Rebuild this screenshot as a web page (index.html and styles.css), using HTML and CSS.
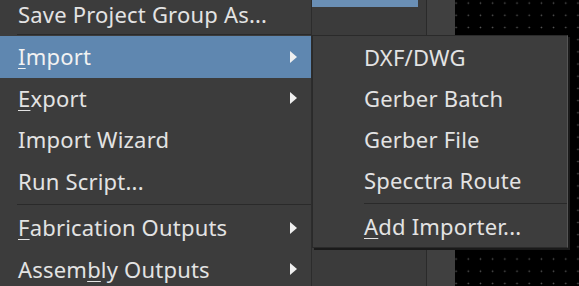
FILE: index.html
```html
<!DOCTYPE html>
<html lang="en">
<head>
  <meta charset="UTF-8" />
  <meta name="viewport" content="width=device-width, initial-scale=1.0" />
  <title>File Menu - Import</title>
  <link rel="stylesheet" href="styles.css">
</head>
<body>
  <div class="desktop">
    <div class="menu-col">
      <ul class="menu">
        <li class="item item-cut">Save Project Group As...</li>
        <li class="sep sep-top"></li>
        <li class="item active"><span><u>I</u>mport</span><i class="arrow"></i></li>
        <li class="item"><span><u>E</u>xport</span><i class="arrow"></i></li>
        <li class="item">Import Wizard</li>
        <li class="item">Run Script...</li>
        <li class="sep"></li>
        <li class="item"><span><u>F</u>abrication Outputs</span><i class="arrow"></i></li>
        <li class="item"><span>Assem<u>b</u>ly Outputs</span><i class="arrow"></i></li>
      </ul>
    </div>
    <div class="panel">
      <div class="panel-tab"></div>
    </div>
    <div class="strip"></div>
    <div class="canvas"></div>

    <ul class="menu submenu">
      <li class="item">DXF/DWG</li>
      <li class="item">Gerber Batch</li>
      <li class="item">Gerber File</li>
      <li class="item">Specctra Route</li>
      <li class="sep"></li>
      <li class="item"><span><u>A</u>dd Importer...</span></li>
    </ul>
  </div>
</body>
</html>
```

FILE: styles.css
```css
body {
  margin: 0;
  background: #000;
  font-family: "Noto Sans", "Open Sans", sans-serif;
  font-size: 22px;
  letter-spacing: 0.2px;
  color: #e3e3e3;
  overflow: hidden;
}
.desktop {
  position: relative;
  display: flex;
  width: 579px;
  height: 286px;
  overflow: hidden;
}
.menu-col {
  width: 311px;
  background: #3c3c3c;
  border-right: 1px solid #2c2c2c;
}
.menu {
  list-style: none;
  margin: 0;
  padding: 0;
}
.menu-col .item {
  height: 41.5px;
}
.menu-col .item-cut {
  height: 34px;
  line-height: 28px;
  align-items: flex-start;
}
.item {
  height: 41px;
  display: flex;
  align-items: center;
  justify-content: space-between;
  padding: 0 14px 0 18px;
  white-space: nowrap;
  line-height: 41px;
}
.item.active {
  background: #5f87b0;
  color: #f2f2f2;
}
.item u {
  text-decoration-thickness: 1px;
  text-underline-offset: 3px;
}
.sep {
  height: 5px;
  position: relative;
}
.sep::after {
  content: "";
  position: absolute;
  left: 17px;
  right: 0;
  top: 2px;
  height: 1px;
  background: #2a2a2a;
}
.sep-top {
  height: 2px;
}
.sep-top::after {
  top: 0;
}
.arrow {
  width: 0;
  height: 0;
  border-top: 6px solid transparent;
  border-bottom: 6px solid transparent;
  border-left: 7px solid #f0f0f0;
}
.panel {
  width: 114px;
  background: #3b3b3b;
  border-right: 1px solid #2a2a2a;
}
.panel-tab {
  width: 106px;
  height: 7px;
  background: #6a8fb5;
}
.strip {
  width: 28px;
  background: #404040;
}
.canvas {
  flex: 1;
  background-color: #000;
  background-image: radial-gradient(circle, #5a5a5a 0.8px, transparent 1px);
  background-size: 12.2px 12.2px;
  background-position: -5px -3px;
}
.submenu {
  position: absolute;
  left: 312px;
  top: 35px;
  width: 254px;
  padding: 1px 0 0;
  background: #3d3d3d;
  border: 1px solid #2a2a2a;
  border-right-color: #555;
  box-shadow: 2px 2px 0 #1a1a1a;
}
.submenu .item {
  padding-left: 51px;
}
.submenu .sep::after {
  left: 51px;
}
```
